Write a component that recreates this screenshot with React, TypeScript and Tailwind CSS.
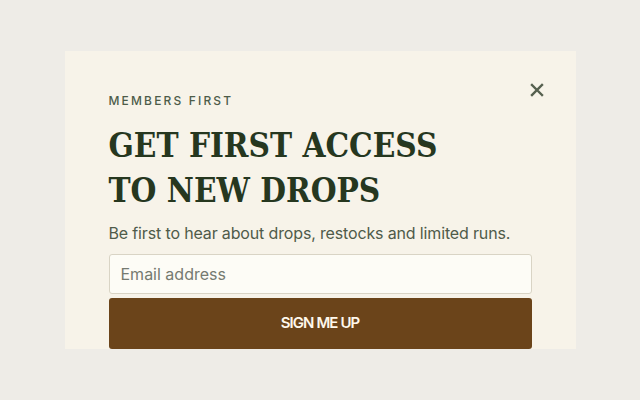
import React from "react";

export default function App() {
  return (
    <div className="flex h-[400px] w-full items-center justify-center bg-[#eeece7]">
      <div className="relative h-[298px] w-[511px] overflow-hidden bg-[#f7f3e9] px-[44px] pt-[40px]">
        <button className="absolute right-[25px] top-[25px] flex h-[28px] w-[28px] items-center justify-center text-[#56604f]">
          <svg width="14" height="14" viewBox="0 0 14 14" fill="none" stroke="currentColor" strokeWidth="2.4" strokeLinecap="square">
            <path d="M2 2L12 12M12 2L2 12" />
          </svg>
        </button>
        <div className="font-['Inter',sans-serif] text-[12px] font-medium leading-[20px] tracking-[0.18em] text-[#4d5c49]">
          MEMBERS FIRST
        </div>
        <h1 className="mt-[12px] font-['DejaVu_Serif_Condensed','Liberation_Serif',serif] text-[33px] font-bold leading-[45px] text-[#26371f]">
          GET FIRST ACCESS
          <br />
          TO NEW DROPS
        </h1>
        <p className="mt-[8px] font-['Inter',sans-serif] text-[16px] leading-[24px] tracking-[-0.15px] text-[#4f5b4a]">
          Be first to hear about drops, restocks and limited runs.
        </p>
        <div className="mt-[9px] flex h-[40px] items-center rounded-[3px] border border-[#d9d4c5] bg-[#fdfcf6] px-[11px] font-['Inter',sans-serif] text-[16px] text-[#757a70]">
          Email address
        </div>
        <button className="mt-[4px] flex h-[51px] w-full items-center justify-center rounded-[3px] bg-[#6b441a] font-['Inter',sans-serif] text-[15px] font-semibold tracking-[-0.06em] text-[#fff8ec]">
          SIGN ME UP
        </button>
      </div>
    </div>
  );
}
